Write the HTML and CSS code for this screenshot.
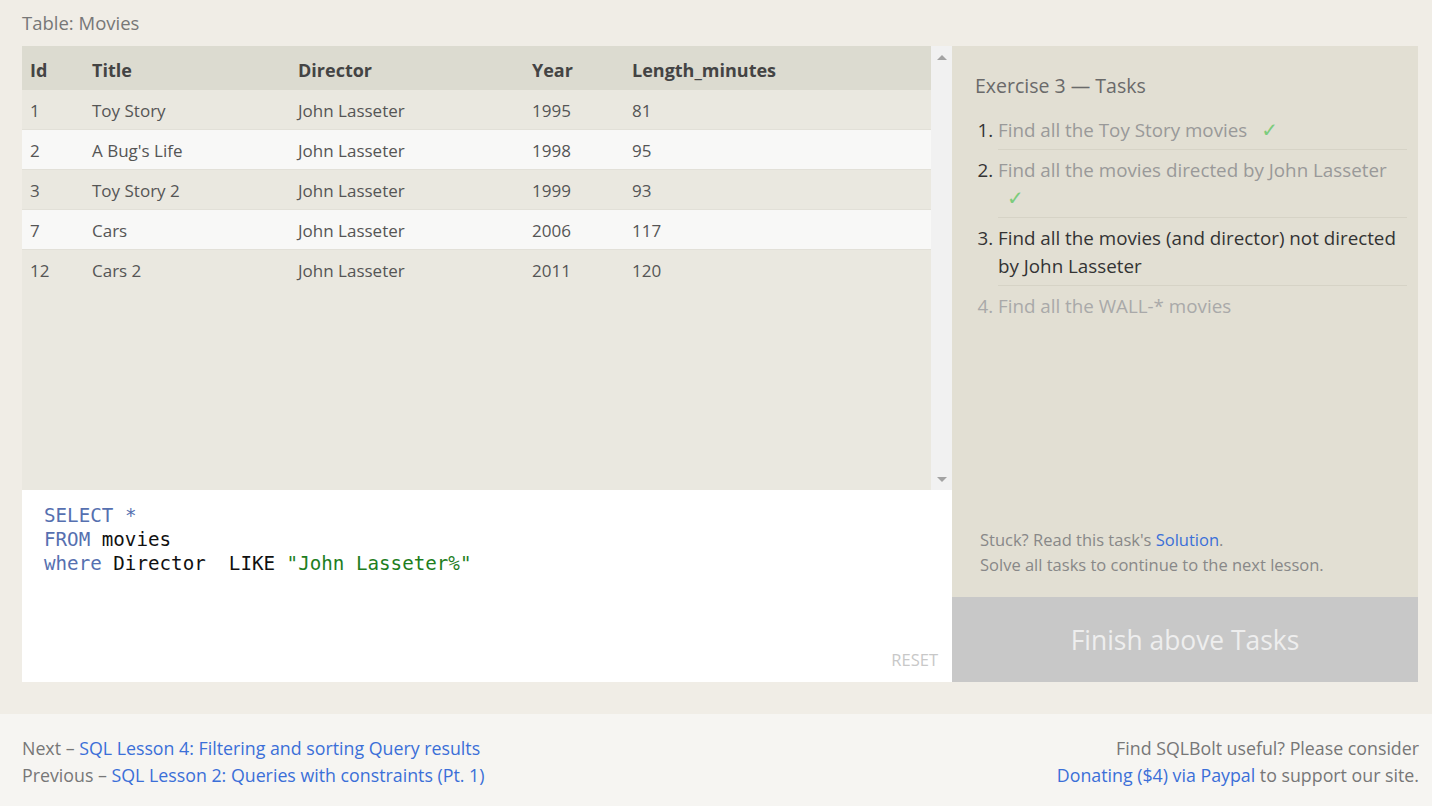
FILE: index.html
```html
<!DOCTYPE html>
<html lang="en">
<head>
<meta charset="utf-8">
<title>SQLBolt - Lesson 3</title>
<link rel="stylesheet" href="styles.css">
</head>
<body>
<div class="page">
  <div class="table-label">Table: Movies</div>
  <div class="exercise">
    <div class="left">
      <div class="results">
        <div class="table-wrap">
          <div class="row head">
            <div class="cell">Id</div>
            <div class="cell">Title</div>
            <div class="cell">Director</div>
            <div class="cell">Year</div>
            <div class="cell">Length_minutes</div>
          </div>
          <div class="row odd">
            <div class="cell">1</div><div class="cell">Toy Story</div><div class="cell">John Lasseter</div><div class="cell">1995</div><div class="cell">81</div>
          </div>
          <div class="row even">
            <div class="cell">2</div><div class="cell">A Bug's Life</div><div class="cell">John Lasseter</div><div class="cell">1998</div><div class="cell">95</div>
          </div>
          <div class="row odd">
            <div class="cell">3</div><div class="cell">Toy Story 2</div><div class="cell">John Lasseter</div><div class="cell">1999</div><div class="cell">93</div>
          </div>
          <div class="row even">
            <div class="cell">7</div><div class="cell">Cars</div><div class="cell">John Lasseter</div><div class="cell">2006</div><div class="cell">117</div>
          </div>
          <div class="row odd last">
            <div class="cell">12</div><div class="cell">Cars 2</div><div class="cell">John Lasseter</div><div class="cell">2011</div><div class="cell">120</div>
          </div>
        </div>
        <div class="scrollbar">
          <span class="arrow up"></span>
          <span class="arrow down"></span>
        </div>
      </div>
      <div class="editor">
        <pre class="code"><span class="kw">SELECT</span> <span class="kw">*</span>
<span class="kw">FROM</span> movies
<span class="kw">where</span> Director  LIKE <span class="str">"John Lasseter%"</span></pre>
        <div class="reset">RESET</div>
      </div>
    </div>
    <div class="right">
      <div class="tasks">
        <div class="tasks-title">Exercise 3 — Tasks</div>
        <ol class="task-list">
          <li class="done"><span class="txt">Find all the Toy Story movies</span> <span class="check">✓</span></li>
          <li class="done"><span class="txt">Find all the movies directed by John Lasseter</span> <span class="check">✓</span></li>
          <li class="current">Find all the movies (and director) not directed by John Lasseter</li>
          <li class="todo">Find all the WALL-* movies</li>
        </ol>
        <div class="stuck">
          <div>Stuck? Read this task's <a class="link" href="#">Solution</a>.</div>
          <div>Solve all tasks to continue to the next lesson.</div>
        </div>
      </div>
      <div class="finish">Finish above Tasks</div>
    </div>
  </div>
</div>
<footer class="footer">
  <div class="nav">
    <div>Next – <a class="link" href="#">SQL Lesson 4: Filtering and sorting Query results</a></div>
    <div>Previous – <a class="link" href="#">SQL Lesson 2: Queries with constraints (Pt. 1)</a></div>
  </div>
  <div class="donate">
    <div>Find SQLBolt useful? Please consider</div>
    <div><a class="link" href="#">Donating ($4) via Paypal</a> to support our site.</div>
  </div>
</footer>
</body>
</html>
```
FILE: styles.css
```css
* { box-sizing: border-box; }
html, body { margin: 0; padding: 0; }
body {
  background: #f0ede6;
  font-family: "Open Sans", "Noto Sans", sans-serif;
  color: #555;
  width: 1432px;
  height: 806px;
  overflow: hidden;
}
.page {
  padding: 0 14px 0 22px;
}
.table-label {
  height: 46px;
  line-height: 46px;
  font-size: 18.5px;
  color: #777;
}
.exercise {
  display: flex;
  height: 636px;
}
.left {
  width: 930px;
  display: flex;
  flex-direction: column;
}
.results {
  height: 444px;
  display: flex;
}
.table-wrap {
  flex: 1;
  background: #eae8e0;
}
.row {
  display: grid;
  grid-template-columns: 62px 206px 234px 100px 1fr;
  height: 40px;
  align-items: center;
  font-size: 17px;
  color: #555;
  border-bottom: 1px solid #e2e0d8;
}
.row.last { border-bottom: none; }
.row .cell { padding-left: 8px; padding-top: 1px; white-space: nowrap; }
.row.head {
  height: 44px;
  padding-top: 3px;
  background: #dcdbd0;
  font-weight: 700;
  font-size: 18px;
  color: #444;
  border-bottom: none;
}
.row.odd { background: #eae8e0; }
.row.even { background: #f8f8f7; }
.scrollbar {
  width: 21px;
  background: #f1f1f1;
  display: flex;
  flex-direction: column;
  justify-content: space-between;
  align-items: center;
  padding: 9px 0 8px;
}
.arrow {
  width: 0;
  height: 0;
  border-left: 5px solid transparent;
  border-right: 5px solid transparent;
}
.arrow.up { border-bottom: 5px solid #a3a3a3; }
.arrow.down { border-top: 5px solid #a3a3a3; }
.editor {
  flex: 1;
  background: #fff;
  display: flex;
  flex-direction: column;
  padding: 14px 14px 12px 22px;
}
.code {
  margin: 0;
  font-family: "DejaVu Sans Mono", "Liberation Mono", monospace;
  font-size: 19.2px;
  line-height: 24px;
  color: #111;
  flex: 1;
}
.kw { color: #5670b0; }
.str { color: #1e7e1e; }
.reset {
  align-self: flex-end;
  font-size: 16.5px;
  color: #c8c8c8;
  line-height: 20px;
}
.right {
  flex: 1;
  display: flex;
  flex-direction: column;
}
.tasks {
  flex: 1;
  background: #e2dfd3;
  display: flex;
  flex-direction: column;
  padding: 26px 11px 20px 23px;
}
.tasks-title {
  font-size: 19.5px;
  line-height: 28px;
  color: #6a6a6a;
}
.task-list {
  margin: 10px 0 0 0;
  padding: 0 0 0 23px;
  font-size: 18.8px;
  line-height: 28.3px;
  color: #333;
}
.task-list li {
  padding: 6px 0 4.5px;
  border-bottom: 1px solid #d6d3c6;
}
.task-list li.todo { border-bottom: none; color: #a9a9a9; }
.task-list .txt { color: #999; }
.check {
  display: inline-block;
  margin-left: 9px;
  color: #7ccc7c;
  font-family: "DejaVu Sans", sans-serif;
  font-size: 20px;
}
.stuck {
  margin-top: auto;
  padding-left: 5px;
  font-size: 16.5px;
  line-height: 25px;
  color: #888;
}
.link { color: #3b6fd8; text-decoration: none; }
.finish {
  height: 85px;
  background: #c8c8c8;
  color: #eeeeee;
  font-size: 26.4px;
  display: flex;
  align-items: center;
  justify-content: center;
}
.footer {
  margin-top: 32px;
  height: 92px;
  background: #f6f5f2;
  display: flex;
  justify-content: space-between;
  padding: 21px 13px 0 22px;
  font-size: 17.8px;
  line-height: 27px;
  color: #777;
}
.donate { text-align: right; }
```
